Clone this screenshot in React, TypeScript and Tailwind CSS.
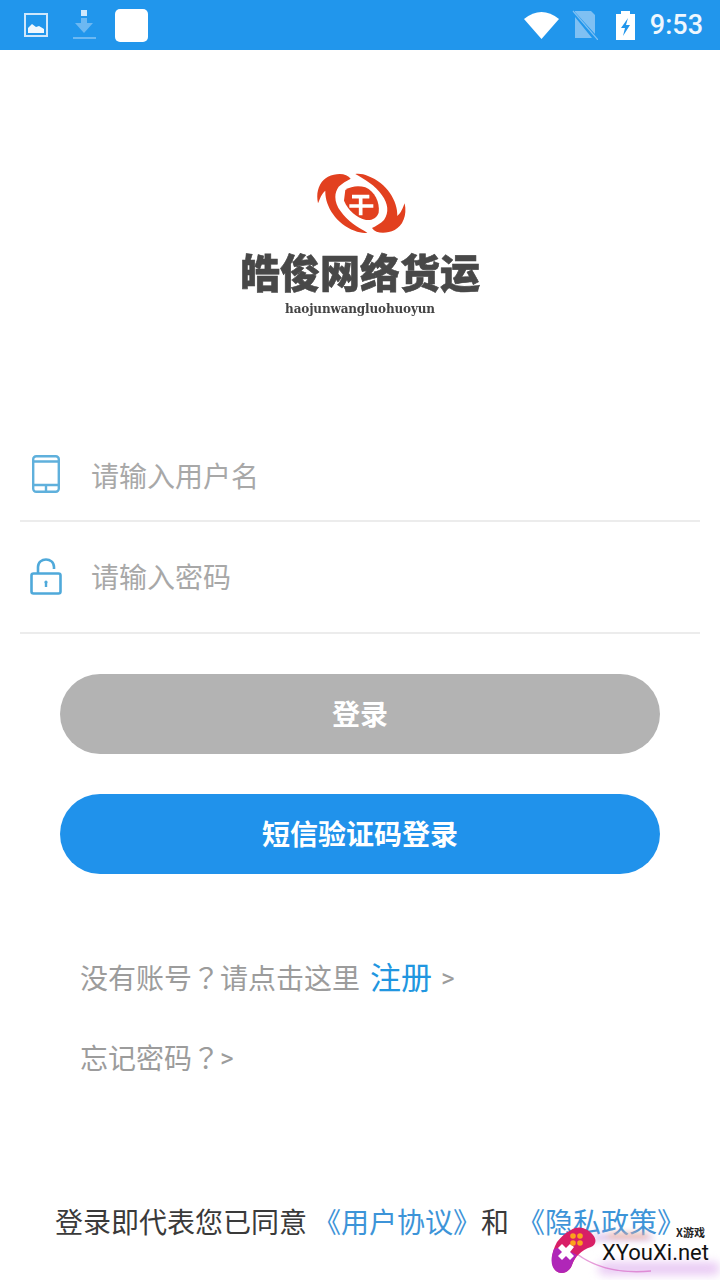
import React from 'react';

const cjk = { fontFamily: '"Roboto", "Noto Sans CJK SC", sans-serif' };
const centeredMark = { fontFamily: '"Noto Sans CJK TC", sans-serif' };

function StatusBar() {
  return (
    <div className="h-[50px] bg-[#2196ec] flex items-center pl-6 pr-[17px] shrink-0">
      {/* image notification */}
      <svg width="24" height="24" viewBox="0 0 24 24" className="mr-[25px]">
        <rect x="1" y="1" width="22" height="22" fill="none" stroke="#cfe7fb" strokeWidth="2" />
        <path d="M4 20 V15 L8 11 L12 14 L15 13 L20 16 V20 Z" fill="#f0f8fe" />
      </svg>
      {/* download */}
      <svg width="23" height="30" viewBox="0 0 23 30" className="mr-[19px]">
        <rect x="8" y="0" width="6" height="6" fill="#cfe7fb" />
        <path d="M8 8 H14 V13 H20 L11 23 L2 13 H8 Z" fill="#6cb8f2" />
        <rect x="0" y="27" width="23" height="2" fill="#6cb8f2" />
      </svg>
      <div className="w-[33px] h-[33px] bg-white rounded-[5px]" />
      <div className="flex-1" />
      <svg width="35" height="28" viewBox="0 0 35 28" className="mr-[13px]">
        <path d="M0 8 Q17.5 -6 35 8 L17.5 28 Z" fill="#fff" />
      </svg>
      <svg width="26" height="30" viewBox="0 0 26 30" className="mr-[18px]">
        <path d="M3 1 H19 L23 5 V24 L3 2 Z M3 7 L20 28 H3 Z" fill="#7fc0f3" />
        <path d="M1 1 L26 30" stroke="#7fc0f3" strokeWidth="1.2" />
      </svg>
      <svg width="19" height="29" viewBox="0 0 19 29" className="mr-[15px]">
        <path d="M5 0 H14 V3 H19 V29 H0 V3 H5 Z" fill="#fff" />
        <path d="M12 7 L5 17 H9 L7 25 L14 14 H10 Z" fill="#2196ec" />
      </svg>
      <span className="text-[27px] leading-none text-[#eef7fe] font-medium" style={{ fontFamily: 'Roboto, sans-serif' }}>9:53</span>
    </div>
  );
}

function Logo() {
  const swoosh = 'M128 32 C116 14 85 14 60 26 C36 38 22 70 30 106 C36 92 40 78 52 68 C50 112 84 168 140 188 C152 193 166 196 178 194 C150 178 118 160 98 130 C80 106 76 78 92 56 C102 46 116 38 128 32 Z';
  return (
    <div className="flex flex-col items-center pt-[118px] h-[381px] shrink-0">
      <svg width="105" height="72" viewBox="0 0 315 216" className="blur-[0.4px]">
        <path d={swoosh} fill="#e2401f" />
        <path d={swoosh} fill="#e2401f" stroke="#fff" strokeWidth="4" paintOrder="stroke" transform="rotate(180 160 106)" />
        <path d="M112 66 C130 54 152 52 172 58 C200 70 216 102 212 134 C206 150 192 158 174 156 C146 150 120 126 108 98 Z" fill="#e2401f" />
        <path d="M132 86 H184 M158 86 V142 M124 114 H196" fill="none" stroke="#fff" strokeWidth="11" />
      </svg>
      <div className="mt-[7px] text-[40px] leading-[48px] font-black text-[#484848] whitespace-nowrap blur-[0.5px] [-webkit-text-stroke:0.6px_#484848]" style={{ fontFamily: '"Noto Sans CJK SC", sans-serif' }}>皓俊网络货运</div>
      <div className="mt-[7px] text-[12px] leading-[14px] font-bold text-[#444444] tracking-[-0.15px] whitespace-nowrap blur-[0.3px]" style={{ fontFamily: '"DejaVu Serif", serif' }}>haojunwangluohuoyun</div>
    </div>
  );
}

function Field({ icon, placeholder, rowClass }: { icon: React.ReactNode; placeholder: string; rowClass: string }) {
  return (
    <div className={`flex items-center border-b-2 border-[#ececec] ${rowClass}`}>
      <div className="w-[71px] flex justify-center pr-[20px] shrink-0">{icon}</div>
      <span className="text-[28px] pt-[4px] text-[#a8a8a8]">{placeholder}</span>
    </div>
  );
}

export default function App() {
  return (
    <div className="w-[720px] h-[1280px] bg-white flex flex-col relative overflow-hidden" style={cjk}>
      <StatusBar />
      <Logo />

      <div className="mx-5">
        <Field
          rowClass="h-[91px]"
          placeholder="请输入用户名"
          icon={
            <svg width="28" height="38" viewBox="0 0 28 38" fill="none" stroke="#5fb0dc" strokeWidth="2.4" className="mb-1">
              <rect x="1.2" y="1.2" width="25.6" height="35.6" rx="3" />
              <path d="M1.2 6.5 H26.8 M1.2 30 H26.8 M14 30 V36.8" />
            </svg>
          }
        />
        <Field
          rowClass="h-[112px]"
          placeholder="请输入密码"
          icon={
            <svg width="32" height="37" viewBox="0 0 32 37" fill="none" stroke="#4fa9da" strokeWidth="2.6" className="mb-0.5">
              <rect x="1.5" y="15.5" width="29" height="20" rx="2" />
              <path d="M8 15 V9 C8 -1 24 -1 24 9 V11" />
              <path d="M16 24 V29" strokeWidth="2.4" />
              <circle cx="16" cy="24" r="1.6" fill="#4fa9da" stroke="none" />
            </svg>
          }
        />
      </div>

      <div className="mx-[60px] mt-10 flex flex-col gap-10">
        <div className="h-20 rounded-full bg-[#b3b3b3] flex items-center justify-center pt-[3px] text-[28px] font-bold text-white">登录</div>
        <div className="h-20 rounded-full bg-[#2092eb] flex items-center justify-center pt-[3px] text-[28px] font-bold text-white">短信验证码登录</div>
      </div>

      <div className="ml-[80px] mt-[82px] flex items-center h-[44px] text-[#9c9c9c] text-[28px] leading-none whitespace-nowrap">
        <span>没有账号<span style={centeredMark}>？</span>请点击这里</span>
        <span className="ml-[10px] text-[31px] text-[#2196e0]">注册</span>
        <span className="ml-[9px] text-[26px]">&gt;</span>
      </div>
      <div className="ml-[80px] mt-[36px] flex items-center h-[44px] text-[#9c9c9c] text-[28px] leading-none whitespace-nowrap">
        <span>忘记密码<span style={centeredMark}>？</span></span>
        <span className="text-[26px]">&gt;</span>
      </div>

      <div className="ml-[55px] mt-[122px] flex items-center h-[44px] text-[28px] leading-none whitespace-nowrap text-[#3a3a3a]">
        <span>登录即代表您已同意</span>
        <span className="ml-[6px] text-[#3d94d8]">《用户协议》</span>
        <span>和</span>
        <span className="ml-[8px] text-[#3d94d8]">《隐私政策》</span>
      </div>

      {/* XYouXi watermark */}
      <div className="absolute left-[548px] top-[1222px] w-[172px] h-[58px]">
        <div className="absolute left-[44px] top-[13px] w-[60px] h-[8px] rounded-full bg-[#c99be0]/70 blur-[4px]" />
        <div className="absolute left-[60px] top-[11px] w-[40px] h-[6px] rounded-full bg-[#f2b48a]/60 blur-[3px]" />
        <div className="absolute left-[46px] top-[20px] w-[122px] h-[24px] bg-white/90 blur-[3px]" />
        <div className="absolute left-[50px] top-[40px] w-[122px] h-[13px] rounded-full bg-[#e0b4f0]/70 blur-[5px]" />
        <svg width="110" height="56" viewBox="0 0 110 56" className="absolute left-[3px] top-[2px]">
          <path d="M26 30 C42 42 66 50 100 47" fill="none" stroke="#d65ac0" strokeWidth="1.5" opacity="0.6" />
        </svg>
        <svg width="48" height="48" viewBox="0 0 48 48" className="absolute left-[3px] top-[5px]">
          <path d="M20 3 C28 -2 36 1 42 8 C46 13 45 18 40 20 C30 23 24 30 21 38 C18 46 10 48 5 44 C-1 38 0 26 6 15 C10 10 14 6 20 3 Z" fill="#d81f66" />
          <path d="M3 22 C-1 32 0 40 5 44 C10 48 18 46 21 38 C22 34 24 31 26 28 L10 20 Z" fill="#b026b8" />
          <path d="M11 17 L15 21 L19 17 L23 20 L19 25 L23 29 L19 33 L15 29 L11 33 L7 29 L11 25 L7 21 Z" fill="#fff" />
          <circle cx="22" cy="9" r="2.8" fill="#fba31c" />
          <circle cx="29" cy="9" r="2.8" fill="#fba31c" />
          <circle cx="22" cy="16" r="2.8" fill="#fba31c" />
          <circle cx="29" cy="16" r="2.8" fill="#fba31c" />
        </svg>
        <span className="absolute left-[128px] top-[3px] text-[11px] leading-[14px] font-bold text-[#222222] whitespace-nowrap" style={{ fontFamily: '"Noto Sans CJK SC", sans-serif' }}>X游戏</span>
        <span className="absolute left-[54px] top-[17px] text-[22px] leading-[28px] text-[#111111] whitespace-nowrap" style={{ fontFamily: 'Roboto, sans-serif' }}>XYouXi.net</span>
      </div>
    </div>
  );
}
